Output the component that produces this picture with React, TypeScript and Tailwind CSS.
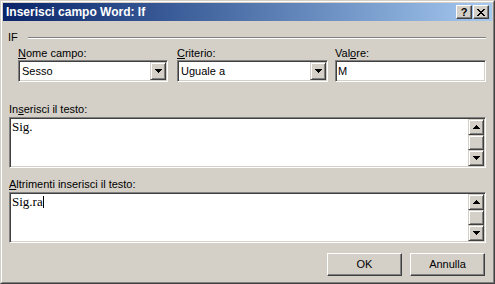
import React from 'react';

// Win2000 classic bevels
const raised =
  'border border-t-[#d4d0c8] border-l-[#d4d0c8] border-r-[#404040] border-b-[#404040] shadow-[inset_1px_1px_0_#ffffff,inset_-1px_-1px_0_#808080] bg-[#d4d0c8]';
const button =
  'border border-t-white border-l-white border-r-[#404040] border-b-[#404040] shadow-[inset_-1px_-1px_0_#808080] bg-[#d4d0c8]';
const sunken =
  'border border-t-[#808080] border-l-[#808080] border-r-white border-b-white shadow-[inset_1px_1px_0_#404040,inset_-1px_-1px_0_#d4d0c8] bg-white';

const Arrow: React.FC<{ up?: boolean }> = ({ up }) => {
  const rows = [7, 5, 3, 1];
  const list = up ? [...rows].reverse() : rows;
  return (
    <svg width="7" height="4" viewBox="0 0 7 4" shapeRendering="crispEdges">
      {list.map((w, i) => (
        <rect key={i} x={(7 - w) / 2} y={i} width={w} height={1} fill="#000" />
      ))}
    </svg>
  );
};

const CloseGlyph: React.FC = () => {
  const cols = [0, 1, 2, 3, 2, 1, 0];
  return (
    <svg width="8" height="7" viewBox="0 0 8 7" shapeRendering="crispEdges">
      {cols.map((c, i) => (
        <g key={i}>
          <rect x={c} y={i} width={2} height={1} fill="#000" />
          <rect x={6 - c} y={i} width={2} height={1} fill="#000" />
        </g>
      ))}
    </svg>
  );
};

const Combo: React.FC<{ value: string; width: string }> = ({ value, width }) => (
  <div className={`${sunken} ${width} h-[22px] p-px flex items-stretch`}>
    <div className="flex-1 flex items-center pl-[2px] text-[11px] text-black">{value}</div>
    <div className={`${raised} w-[16px] flex items-center justify-center`}>
      <Arrow />
    </div>
  </div>
);

const TextBox: React.FC<{ children: React.ReactNode }> = ({ children }) => (
  <div className={`${sunken} h-[51px] p-px flex`}>
    <div className="flex-1 pl-px font-['Liberation_Serif',serif] text-[13px] leading-[15px] text-black">
      {children}
    </div>
    <div className="w-[16px] flex flex-col">
      <div className={`${raised} h-[16px] flex items-center justify-center`}>
        <Arrow up />
      </div>
      <div className={`${raised} flex-1`} />
      <div className={`${raised} h-[16px] flex items-center justify-center`}>
        <Arrow />
      </div>
    </div>
  </div>
);

const App: React.FC = () => {
  return (
    <div className="w-[495px] h-[284px] bg-[#d4d0c8] font-['Liberation_Sans',Arial,sans-serif] text-[11px] text-black border border-t-[#d4d0c8] border-l-[#d4d0c8] border-r-[#404040] border-b-[#404040]">
      <div className="h-full border border-t-white border-l-white border-r-[#808080] border-b-[#808080] p-px flex flex-col">
        {/* Title bar */}
        <div className="h-[18px] bg-gradient-to-r from-[#0a246a] to-[#a6caf0] flex items-center pl-[3px] pr-[3px]">
          <span className="flex-1 text-white font-bold text-[12px] leading-[14px]">Inserisci campo Word: If</span>
          <div className="flex gap-px">
            <div className={`${button} w-[16px] h-[14px] flex items-center justify-center font-bold text-[11px] leading-none`}>?</div>
            <div className={`${button} w-[16px] h-[14px] flex items-center justify-center`}>
              <CloseGlyph />
            </div>
          </div>
        </div>

        {/* Body */}
        <div className="flex-1 flex flex-col pl-[6px] pr-[6px] pt-[10px]">
          {/* IF group header */}
          <div className="h-[13px] flex items-center leading-[13px] -ml-px">
            <span>IF</span>
            <div className="flex-1 ml-[10px] h-[2px] border-t border-t-[#808080] border-b border-b-white" />
          </div>

          {/* labels */}
          <div className="flex mt-[3px] h-[13px] leading-[13px]">
            <span className="ml-[9px] w-[150px]"><u>N</u>ome campo:</span>
            <span className="ml-[9px] w-[151px]"><u>C</u>riterio:</span>
            <span className="ml-[7px] w-[151px]">Val<u>o</u>re:</span>
          </div>

          {/* fields */}
          <div className="flex">
            <div className="ml-[9px]"><Combo value="Sesso" width="w-[150px]" /></div>
            <div className="ml-[9px]"><Combo value="Uguale a" width="w-[151px]" /></div>
            <div className={`${sunken} ml-[7px] w-[151px] h-[22px] flex items-center pl-[2px]`}>M</div>
          </div>

          <div className="mt-[21px] h-[14px] leading-[13px]">In<u>s</u>erisci il testo:</div>
          <TextBox>Sig.</TextBox>

          <div className="mt-[10px] h-[14px] leading-[13px]"><u>A</u>ltrimenti inserisci il testo:</div>
          <TextBox>
            Sig.ra<span className="inline-block w-px h-[12px] bg-black align-[-2px]" />
          </TextBox>

          {/* buttons */}
          <div className="mt-[10px] flex justify-end gap-[8px] pr-px">
            <div className={`${button} w-[75px] h-[23px] flex items-center justify-center`}>OK</div>
            <div className={`${button} w-[75px] h-[23px] flex items-center justify-center`}>Annulla</div>
          </div>
        </div>
      </div>
    </div>
  );
};

export default App;
